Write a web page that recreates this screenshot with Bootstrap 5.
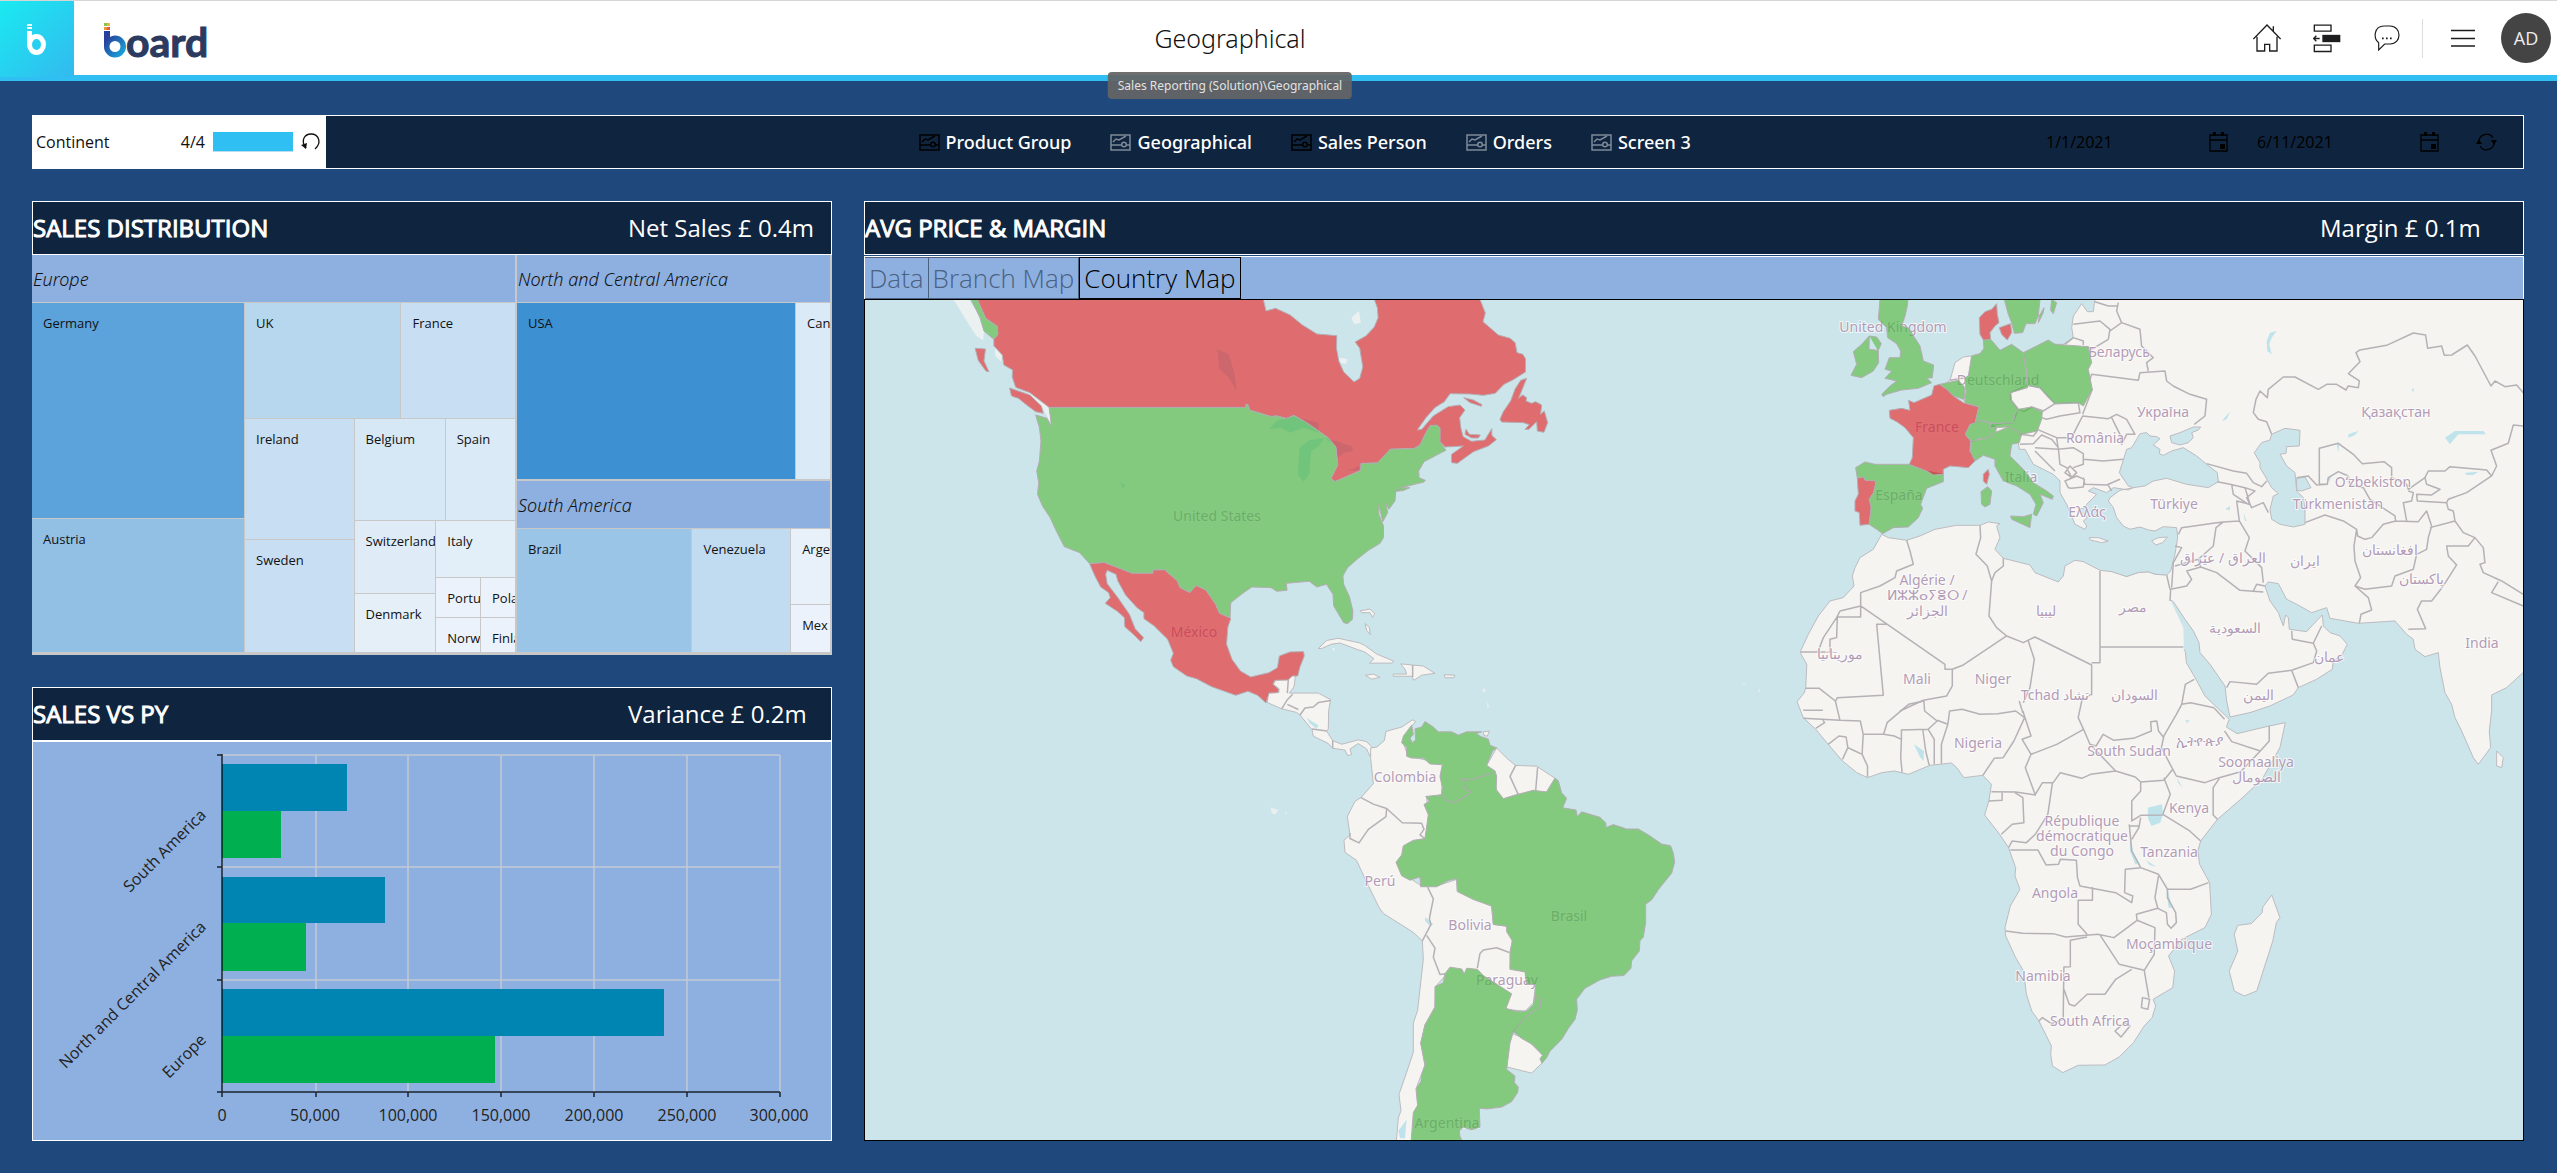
<!DOCTYPE html>
<html lang="en">
<head>
<meta charset="utf-8">
<meta name="viewport" content="width=device-width, initial-scale=1">
<title>Geographical</title>
<link rel="stylesheet" href="https://cdn.jsdelivr.net/npm/bootstrap@5.3.0/dist/css/bootstrap.min.css">
<style>
:root{--navy:#0f243e;--page:#1f497d;--pale:#8db0e1;--sky:#30bff3;--rule:#c8c8c8}
body{background:var(--page);font-family:"Open Sans","Noto Sans",sans-serif;color:#111;font-size:16px}
.topbar{height:81px;border-top:1px solid #d6d6d6;border-bottom:6px solid var(--sky);background:#fff}
.brandbox{width:74px;height:76px;background:linear-gradient(135deg,#1aeaf0,#33b9ef);z-index:1}
.brand{width:230px}
.wordmark{width:110px;height:50px;margin-left:30px;margin-top:17px;overflow:visible}
.wordmark text{font-family:Lato,sans-serif;font-weight:700;font-size:41px;fill:#2b3a5e;stroke:#2b3a5e;stroke-width:1}
.page-title{font-family:"Noto Sans",sans-serif;font-size:25px;font-weight:300;line-height:34px;color:#111}
.path-tip{font-family:"Noto Sans",sans-serif;top:71px;left:50%;transform:translateX(-50%);background:rgba(100,100,100,.93);color:#e2e2e2;font-size:12px;line-height:27px;border-radius:4px;padding:0 10px;z-index:5}
.actions{width:327px;padding-right:6px;padding-left:23px}
.actions button,.plain-btn{background:none;border:0;padding:0;line-height:0}
.avatar{width:50px;height:50px;background:#444;color:#eee;font-size:18px}
.split{width:1px;height:39px;background:#ddd;margin:0 28px 0 22px}
main{min-height:calc(100vh - 81px);padding:34px 33px 32px 32px;gap:32px}
.filterbar{height:54px;border:1px solid #fff;background:var(--navy)}
.selector{width:293px;padding-left:3px;padding-right:5px}
.meter{width:80px;height:20px;background:var(--sky);border-bottom:1px solid #bde}
.screens{margin-left:23.8%;gap:39px}
.screens a{font-family:"Noto Sans",sans-serif;color:#fff;font-size:18px;text-decoration:none;gap:6px;font-weight:500}
.screens svg{color:#000}
.screens .dim svg{color:#7e8a99}
.dates{padding-right:26px}
.dates input{background:none;border:0;padding:0;width:163px;color:#000;font-size:16px}
.dates label{width:211px}
.board-grid{display:grid;grid-template-columns:800fr 1660fr;gap:32px}
.left-col{display:grid;grid-template-rows:1fr 1fr;gap:32px;min-width:0}
.head{height:54px;border:1px solid #fff;background:var(--navy);color:#fff;font-size:24px;line-height:52px}
.head h2{font-size:24px;line-height:52px;font-weight:400;-webkit-text-stroke:1px #fff;margin:0}
.head span{width:203px}
.tree{background:var(--rule);padding-bottom:3px;padding-right:2px}
.tree .d-flex{min-width:0;min-height:0}
.grp{height:47px;background:var(--pale);font-family:"Noto Sans",sans-serif;font-size:18px;font-style:italic;font-weight:300;line-height:49px;padding-left:1px;white-space:nowrap;overflow:hidden;flex:none}
.tile{overflow:hidden;white-space:nowrap;text-indent:11px;font-size:13px;line-height:41px;min-width:0;min-height:0}
.g1{gap:1px}.g2{gap:2px}
.chart-box{background:var(--pale);border:1px solid #fff}
.chart-box svg,.map-box svg{position:absolute;inset:0;width:100%;height:100%}
.chart-box text{font-size:16px;fill:#222}
.tabs{background:var(--pale);border:1px solid #fff;border-bottom:0;height:43px;margin-top:1px}
.tabs button{background:none;border:1px solid #4b6180;border-left-width:0;color:#4b6180;font-size:26px;font-weight:300;line-height:32px;padding:4px 4px}
.tabs button.on{color:#000;border:1px solid #000}
.map-box{background:#cce5eb;border:1px solid #000;overflow:hidden}
.land{fill:#f5f4f1;stroke:#bcbcc0;stroke-width:1}
.fillin{fill:#f5f4f1;stroke:none}
.sea{fill:#cce5eb;stroke:#bcbcc0}
.lake{fill:#bfe3ea;stroke:none}
.bord{fill:none;stroke:#b5b1b6;stroke-width:1.5}
.map-box path{vector-effect:non-scaling-stroke;stroke-linejoin:round}
.names{font-family:"Noto Sans",sans-serif;font-size:14px;text-anchor:middle;fill:#b39cb6;stroke:#fff;stroke-opacity:.7;stroke-width:2;paint-order:stroke}
</style>
<script src="https://cdn.jsdelivr.net/npm/bootstrap@5.3.0/dist/js/bootstrap.bundle.min.js"></script>
</head>
<body>
<svg width="0" height="0" class="position-absolute" aria-hidden="true">
  <symbol id="screen" viewBox="0 0 21 17"><g fill="none" stroke="currentColor" stroke-width="1.5"><rect x="1" y="1" width="19" height="15"/><path d="M1 11H12M16 11H20M3 8L6 5L9 6L16 2"/><circle cx="14" cy="10.500" r="2.300"/></g></symbol>
  <symbol id="cal" viewBox="0 0 19 20"><g fill="none" stroke="#000" stroke-width="1.300"><path d="M1 3H18V19H1ZM1 8H18"/></g><path d="M4 0H7V4H4ZM12 0H15V4H12ZM11 12H16V17H11Z"/></symbol>
</svg>

<header class="topbar d-flex position-relative">
  <div class="brand d-flex flex-shrink-0">
    <a class="brandbox position-relative flex-shrink-0 d-block" href="#" aria-label="Home">
      <svg width="74" height="76" viewBox="0 0 74 76"><g fill="#fff"><rect x="27" y="23" width="5" height="2" opacity=".9"/><rect x="27" y="26" width="5" height="2"/><rect x="27" y="30" width="5" height="15"/></g><ellipse cx="36.500" cy="43.500" rx="7" ry="8" fill="none" stroke="#fff" stroke-width="5"/></svg>
    </a>
    <svg class="wordmark flex-shrink-0" viewBox="0 0 110 50" role="img" aria-label="board">
      <defs><linearGradient id="bl" x1="0" y1="0" x2="1" y2="1"><stop offset=".2" stop-color="#27419a"/><stop offset="1" stop-color="#16b6e8"/></linearGradient></defs>
      <rect x="0" y="5" width="3" height="3" fill="#8cc152"/><rect x="3" y="5" width="3" height="3" fill="#f2b33d"/><rect x="0" y="9" width="3" height="3" fill="#f39237"/><rect x="3" y="9" width="3" height="3" fill="#e2574c"/>
      <path fill="url(#bl)" fill-rule="evenodd" d="M0 13H6V19Q8 17.500 11 17.500A11 11 0 1 1 0 28.500ZM11 23A5.500 5.500 0 1 0 11 34A5.500 5.500 0 1 0 11 23Z"/>
      <text x="22" y="39">oard</text>
    </svg>
  </div>
  <div class="flex-grow-1 position-relative d-flex justify-content-center">
    <h1 class="page-title m-0 pt-1 mt-3 text-center">Geographical</h1>
    <div class="path-tip position-absolute text-nowrap">Sales Reporting (Solution)\Geographical</div>
  </div>
  <div class="actions d-flex align-items-center flex-shrink-0">
    <button type="button" aria-label="Home"><svg width="28" height="28" viewBox="0 0 84 84" fill="none" stroke="#1d1d1f" stroke-width="4"><path d="M1 45L42 3L83 45M12 38V81H35V61H50V81H72V38M61 7V22"/></svg></button>
    <button type="button" aria-label="Procedures" style="margin-left:32px"><svg width="28" height="29" viewBox="0 0 84 86" fill="none" stroke="#1d1d1f" stroke-width="4"><path d="M4 3H54V21H4ZM4 63H54V82H4ZM2 43H20M10 35L2 43L10 51"/><path d="M28 32H82V54H28Z" fill="#1d1d1f" stroke="none"/></svg></button>
    <button type="button" aria-label="Chat" style="margin-left:33px"><svg width="26" height="26" viewBox="0 0 78 78" fill="none" stroke="#1d1d1f" stroke-width="3.500"><path d="M14 53C-3 40 0 3 30 3H48C84 3 84 57 48 57H32L14 75Z"/><path d="M24 40H29M36 40H41M48 40H53" stroke-width="5"/></svg></button>
    <span class="split"></span>
    <button type="button" aria-label="Menu"><svg width="24" height="18" viewBox="0 0 24 18" stroke="#1d1d1f" stroke-width="1.500"><path d="M0 1.500H24M0 9.500H24M0 17H24"/></svg></button>
    <span class="avatar rounded-circle d-flex align-items-center justify-content-center ms-auto">AD</span>
  </div>
</header>

<main class="d-flex flex-column">
  <div class="filterbar d-flex">
    <div class="selector bg-white d-flex align-items-center flex-shrink-0">
      <span>Continent</span><span class="ms-auto me-2">4/4</span><span class="meter me-2"></span>
      <button type="button" class="plain-btn" aria-label="Reset"><svg width="20" height="18" viewBox="0 0 20 18" fill="none" stroke="#111" stroke-width="1.300"><path d="M5 15C-1 7 4 1 10 1C18 1 21 10 14 16"/><path d="M0 12L5 16L6 10Z" fill="#111" stroke="none"/></svg></button>
    </div>
    <nav class="screens d-flex align-items-center flex-shrink-0">
      <a class="d-flex align-items-center" href="#"><svg width="21" height="17"><use href="#screen"/></svg>Product Group</a>
      <a class="d-flex align-items-center dim" href="#"><svg width="21" height="17"><use href="#screen"/></svg>Geographical</a>
      <a class="d-flex align-items-center" href="#"><svg width="21" height="17"><use href="#screen"/></svg>Sales Person</a>
      <a class="d-flex align-items-center dim" href="#"><svg width="21" height="17"><use href="#screen"/></svg>Orders</a>
      <a class="d-flex align-items-center dim" href="#"><svg width="21" height="17"><use href="#screen"/></svg>Screen 3</a>
    </nav>
    <div class="dates d-flex align-items-center ms-auto">
      <label class="d-flex align-items-center"><input type="text" value="1/1/2021" aria-label="From"><svg width="19" height="20"><use href="#cal"/></svg></label>
      <label class="d-flex align-items-center"><input type="text" value="6/11/2021" aria-label="To"><svg width="19" height="20"><use href="#cal"/></svg></label>
      <button type="button" class="plain-btn ms-2" aria-label="Refresh"><svg width="21" height="18" viewBox="0 0 21 18" fill="none" stroke="#000" stroke-width="1.300"><path d="M3 9A7.500 7.500 0 0 1 17 5M18 9A7.500 7.500 0 0 1 4 13"/><path d="M0 11L3 6L6 11ZM15 7H21L18 12Z" fill="#000" stroke="none"/></svg></button>
    </div>
  </div>

  <div class="board-grid flex-grow-1">
    <div class="left-col">
      <section class="d-flex flex-column">
        <div class="head d-flex justify-content-between"><h2>SALES DISTRIBUTION</h2><span>Net Sales £ 0.4m</span></div>
        <div class="tree d-flex flex-fill g2" id="tree"></div>
      </section>
      <section class="d-flex flex-column">
        <div class="head d-flex justify-content-between"><h2>SALES VS PY</h2><span>Variance £ 0.2m</span></div>
        <div class="chart-box flex-fill position-relative">
          <svg viewBox="33 742 798 398">
            <g stroke="#c3c9d2" stroke-width="1.500"><path d="M316 755V1092M408 755V1092M501 755V1092M594 755V1092M687 755V1092M780 755V1092M222 755H780M222 867H780M222 980H780" fill="none"/></g>
            <g fill="#0085b2"><path d="M222 764H347V811H222ZM222 877H385V923H222ZM222 989H664V1036H222Z"/></g>
            <g fill="#00b050"><path d="M222 811H281V858H222ZM222 923H306V971H222ZM222 1036H495V1083H222Z"/></g>
            <path d="M222 754V1097M217 755H222M217 867H222M217 980H222M217 1092H780M316 1092V1097M408 1092V1097M501 1092V1097M594 1092V1097M687 1092V1097M780 1092V1097" fill="none" stroke="#000" stroke-opacity=".8" stroke-width="1.500"/>
            <g text-anchor="middle"><text x="222" y="1121">0</text><text x="315" y="1121">50,000</text><text x="408" y="1121">100,000</text><text x="501" y="1121">150,000</text><text x="594" y="1121">200,000</text><text x="687" y="1121">250,000</text><text x="779" y="1121">300,000</text></g>
            <g text-anchor="end"><text transform="translate(207 816) rotate(-45)">South America</text><text transform="translate(207 928) rotate(-45)">North and Central America</text><text transform="translate(207 1041) rotate(-45)">Europe</text></g>
          </svg>
        </div>
      </section>
    </div>

    <section class="d-flex flex-column">
      <div class="head d-flex justify-content-between"><h2>AVG PRICE &amp; MARGIN</h2><span>Margin £ 0.1m</span></div>
      <div class="tabs d-flex"><button type="button">Data</button><button type="button">Branch Map</button><button type="button" class="on">Country Map</button></div>
      <div class="map-box flex-fill position-relative">
        <svg viewBox="865 299 1658 840" preserveAspectRatio="xMidYMid slice">
          <defs>
            <g id="gain">
              <g transform="translate(850 290) scale(.3827 .3333)">
                <path d="M316 25H333L355 82 385 105 387 130 376 145 350 120 340 80Z"/>
                <path d="M520 349L1034 349 1034 340 1040 340 1045 357 1100 376 1115 374 1140 382 1160 373 1190 392 1225 420 1250 440 1270 468 1275 522 1257 563 1268 571 1300 555 1334 538 1335 517 1378 515 1412 474 1474 472 1489 462 1502 430 1515 404 1533 402 1542 410 1542 452 1557 478 1500 512 1486 540 1487 560 1503 568 1500 573 1440 590 1426 603 1424 630 1408 655 1400 635 1405 665 1392 692 1382 642 1382 670 1394 705 1394 740 1385 757 1355 778 1330 800 1300 830 1288 855 1290 880 1305 917 1314 960 1313 985 1300 998 1290 995 1264 945 1262 910 1245 880 1220 888 1200 871 1140 877 1142 898 1115 901 1100 890 1050 888 1025 908 995 935 993 980 965 967 955 940 930 898 905 884 888 905 862 890 855 870 822 837 792 837 792 847 737 847 665 815 626 818 600 785 560 767 540 722 523 680 503 645 490 610 493 575 488 540 495 510 499 450 495 410 485 372 515 382 526 405 524 380Z"/>
                <path d="M1425 601L1440 590 1463 590 1445 599Z"/>
              </g>
              <g transform="translate(1250 600) scale(.3333 .3654)">
                <path d="M485 340L460 370 455 388 470 400 470 425 485 430 520 430 540 446 577 448 570 480 577 510 575 527 587 545 612 552 655 530 664 522 645 515 637 487 660 490 722 473 735 465 710 450 728 410 740 402 720 395 715 378 690 370 680 362 695 358 650 358 625 367 605 358 565 358 550 345 525 330 515 345 495 350 497 380 487 388 480 375 490 365Z"/>
                <path d="M527 535L577 530 587 545 612 552 655 530 664 522 645 515 637 487 660 490 722 473 735 465 740 480 738 515 760 541 800 530 850 518 890 523 915 485 925 492 935 525 950 540 938 566 978 572 982 590 995 577 1050 592 1068 608 1068 620 1090 612 1130 624 1165 624 1195 640 1235 665 1262 670 1270 690 1274 715 1265 745 1225 790 1205 818 1187 830 1187 880 1180 920 1170 930 1168 958 1145 985 1143 1005 1122 1025 1085 1027 1050 1037 1005 1060 980 1090 982 1120 975 1145 955 1170 935 1200 900 1232 890 1250 876 1265 870 1253 878 1243 850 1215 815 1197 790 1178 825 1140 872 1108 873 1090 855 1080 857 1050 830 1048 825 1015 780 1008 780 960 787 930 770 905 770 890 730 885 725 835 670 817 622 795 620 760 595 765 560 782 512 782 510 755 480 764 455 752 438 715 455 695 460 670 490 655 525 650 535 585 522 557 538 548Z"/>
                <path d="M600 1002L635 1007 643 1020 650 1005 682 1008 700 1025 785 1075 768 1115 800 1123 830 1122 850 1105 855 1080 873 1090 872 1108 825 1140 790 1180 780 1210 770 1282 795 1300 793 1318 805 1330 803 1345 785 1370 755 1385 710 1390 688 1388 690 1440 665 1447 640 1440 628 1450 630 1465 640 1485 483 1485 490 1400 503 1380 498 1335 513 1315 515 1295 525 1270 512 1210 525 1160 555 1112 555 1055 580 1045 585 1020Z"/>
              </g>
              <g transform="translate(1750 290) scale(.3333)">
                <path d="M390 25L474 25 472 45 465 75 455 105 475 110 510 165 520 210 551 222 547 260 530 262 545 275 505 292 455 297 410 310 400 317 395 310 420 285 440 270 405 262 425 240 405 235 418 200 450 200 452 180 440 158 413 140 410 110 385 85Z"/>
                <path d="M358 135L380 138 394 158 385 178 386 215 370 240 335 260 303 253 320 220 310 182 335 160ZM358 135L357 175 383 178"/>
                <path d="M763 25H870L865 75 855 98 828 98 818 125 793 127 785 95 775 70ZM905 25L920 35 910 68 902 58ZM882 50L880 65 865 95 868 75Z"/>
                <path d="M700 147L722 145 735 160 750 178 785 160 820 185 825 220 833 290 782 305 785 330 805 355 790 395 740 400 690 388 675 395 686 348 645 335 648 300 645 260 655 255 665 195 690 188 702 172Z"/>
                <path d="M820 185L895 147 915 160 1015 167 1025 215 1015 235 1027 295 1000 345 985 335 915 338 895 318 870 290 833 283 830 240Z"/>
                <path d="M570 280L625 268 645 290 643 325 610 315 590 295Z"/>
                <path d="M713 587L725 600 720 640 705 648 695 640 693 602ZM782 675L820 677 845 670 840 710 785 685Z"/>
                <path d="M478 520L530 540 580 550 580 572 530 592 512 640 518 652 505 680 475 708 430 710 398 728 380 715 357 700 363 650 357 625 370 605 376 580 376 570 345 568 340 558 322 562 317 530 345 513 375 520Z"/>
                <path d="M660 400L690 388 725 398 740 410 735 425 715 440 690 443 665 452 645 430Z"/>
                <path d="M805 355L845 348 877 362 875 385 862 420 815 430 775 408 720 410 725 398 790 395 795 370Z"/>
                <path d="M665 450L715 440 735 425 775 408 815 430 808 455 785 460 780 495 825 540 850 575 890 600 910 615 907 625 870 610 880 635 860 675 850 670 858 640 840 610 800 585 760 570 735 525 735 505 700 493 675 510 662 485Z"/>
              </g>
            </g>
            <g id="loss">
              <g transform="translate(850 290) scale(.3827 .3333)">
                <path d="M333 25L1080 25 1087 60 1112 52 1150 72 1182 102 1220 129 1272 134 1271 170 1277 210 1290 243 1317 273 1332 262 1340 228 1332 172 1320 153 1348 135 1370 108 1380 80 1378 50 1370 25 1646 25 1660 66 1654 92 1694 132 1725 142 1738 155 1743 185 1758 190 1765 203 1765 243 1733 266 1709 280 1686 307 1655 313 1620 309 1568 308 1553 332 1528 350 1505 380 1482 417 1494 415 1524 375 1563 347 1594 342 1607 357 1593 380 1596 410 1602 437 1624 451 1659 447 1677 413 1677 433 1689 446 1668 465 1629 482 1587 517 1572 515 1572 490 1603 465 1555 468 1542 452 1542 410 1533 402 1515 404 1502 430 1489 462 1474 472 1412 474 1378 515 1335 517 1334 538 1300 555 1268 571 1257 563 1275 522 1270 468 1250 440 1225 420 1190 392 1160 373 1140 382 1115 374 1100 376 1045 357 1040 340 1034 340 1034 349 520 349 470 305 433 289 424 258 425 237 402 222 398 192 376 165 376 145 387 130 385 105 355 82Z"/>
                <path d="M327 172L354 174 350 210 363 242 355 240 335 208ZM417 291L470 312 500 345 505 367 485 362 465 345 440 322 422 315Z"/>
                <path d="M626 818L665 815 737 847 792 847 792 837 822 837 855 870 862 890 888 905 905 884 930 898 955 940 965 967 995 982 987 1010 984 1060 998 1105 1020 1140 1047 1158 1095 1145 1117 1130 1122 1095 1150 1083 1185 1082 1187 1095 1175 1130 1170 1155 1155 1155 1145 1167 1110 1168 1105 1180 1120 1195 1118 1205 1095 1206 1087 1236 1065 1213 1040 1201 1008 1213 945 1187 905 1163 880 1155 845 1127 838 1108 845 1087 830 1045 795 1005 768 983 768 965 750 950 720 912 700 870 695 850 672 838 668 850 672 878 700 920 730 970 745 1013 767 1040 760 1052 745 1035 718 1007 717 980 700 962 667 937 680 920 676 905 655 888 640 855Z"/>
              </g>
              <g transform="translate(1390 290) scale(.3333)">
                <path d="M410 262L392 268 375 295 362 330 340 362 330 385 335 393 400 395 418 401 405 415 417 415 440 392 442 420 462 424 473 395 463 360 452 370 455 342 437 332 425 337 408 330 410 320 398 312 386 322Z"/>
                <path d="M221 320L250 327 276 341 274 346 240 335ZM228 415L238 430 271 432 265 441 245 441 225 430Z"/>
              </g>
              <g transform="translate(1750 290) scale(.3333)">
                <path d="M740 38L742 70 747 95 735 105 720 125 722 145 700 147 690 130 688 80 705 62 725 55ZM748 110L782 98 785 125 772 147 755 130Z"/>
                <path d="M568 280L590 295 610 315 640 335 686 348 675 395 660 400 645 430 662 450 660 480 675 510 655 530 600 525 580 535 580 550 550 552 530 540 478 520 487 500 490 440 465 410 440 392 420 382 418 358 455 352 480 358 476 328 492 335 545 312 552 285Z"/>
                <path d="M715 535L718 550 710 580 700 570 700 550Z"/>
                <path d="M322 562L340 558 345 568 376 570 376 580 370 605 357 625 363 650 357 700 330 703 328 665 315 660 315 630 325 610Z"/>
              </g>
            </g>
          </defs>

          <!-- Europe and Asia -->
          <g transform="translate(2130 290) scale(.3333)">
            <path class="land" d="M-105 20H1190V1135L1130 1190 1085 1212 1085 1260 1078 1320 1082 1370 1060 1400 1045 1420 1030 1400 995 1320 975 1280 965 1240 945 1205 930 1130 925 1085 885 1097 855 1075 850 1045 830 1030 795 990 685 997 600 982 590 950 545 965 500 940 470 925 445 878 415 873 405 885 420 930 445 965 460 1005 467 972 475 980 478 1015 530 1022 550 1000 577 972 580 1005 600 1025 630 1035 652 1060 637 1090 610 1110 607 1135 560 1165 505 1190 490 1212 420 1245 360 1265 300 1278 290 1230 285 1185 240 1120 210 1085 207 1055 190 1020 165 985 130 932 118 925 105 935 65 885 105 960 130 1010 135 1045 165 1080 -60 1080 -60 842 -10 857 25 845 55 843 75 850 110 852 122 840 135 790 143 740 140 710 100 707 75 720 55 717 30 708 0 715 -20 705 -40 680 -50 650 -65 630 -60 620 -30 598 10 590 -5 597 -50 590 -70 605 -110 590 -125 600 -100 610 -130 640 -135 650 -155 655 -128 680 -140 690 -130 705 -135 715 -165 700 -190 640 -210 605 -210 570 -230 550 -290 520 -315 475 -332 475 -335 455 -400 420 -490 430 -495 330 -560 283 -540 268 -525 215 -500 198 -475 195 -420 180 -320 190 -235 160 -200 160 -170 140 -175 110 -170 75 -145 38 -128 62 -110 62Z"/>
            <path class="land" d="M-122 740L-95 740 -65 750 -85 755 -120 747ZM65 750L85 740 112 738 98 755 78 762ZM1100 1380L1120 1400 1115 1430 1100 1425Z"/>
            <path class="sea" d="M-5 585L-32 545 -10 475 5 470 20 445 30 428 50 425 60 435 80 437 90 443 70 462 90 475 88 488 100 493 125 480 160 470 200 495 230 520 262 545 265 572 235 590 170 580 110 562 70 570 45 585 10 590Z"/>
            <path class="sea" d="M120 435L150 425 190 408 212 408 205 417 185 425 190 440 175 455 150 462 125 455Z"/>
            <path class="sea" d="M425 430L465 412 510 418 508 465 470 467 468 487 450 490 470 525 495 545 500 600 520 620 525 655 525 700 490 708 450 700 425 685 420 655 430 615 445 608 425 590 405 555 390 530 390 515 373 485 395 455 420 447ZM500 562L525 558 543 590 515 600 500 598Z"/>
            <path class="lake" d="M945 440L975 420 1060 420 1068 430 985 430 960 460ZM1005 545L1045 542 1030 552 1010 552ZM655 430L685 420 675 432 655 440ZM410 150L420 125 440 120 425 140 418 160 425 190 412 180ZM285 655L300 645 300 658ZM340 665L350 690 345 690ZM275 390L300 362 290 385ZM845 295L852 292 850 305ZM590 565L605 550 600 570ZM620 460L628 458 625 485Z"/>
          </g>
          <!-- Africa -->
          <g transform="translate(1750 290) scale(.3333)">
            <path class="land" d="M1245 852L1215 850 1195 843 1165 845 1130 857 1085 842 1050 838 1000 812 975 808 945 825 940 855 925 873 855 845 840 822 760 802 735 775 750 740 740 705 750 698 715 693 690 703 620 703 555 715 510 735 470 748 415 740 395 730 370 775 330 800 315 830 307 855 312 885 280 920 240 930 205 975 175 1030 152 1080"/>
            <path class="fillin" d="M153 1082L316 890 1235 870 1300 1010 1302 1082Z"/>
          </g>
          <g transform="translate(1780 650) scale(.3571 .3333)">
            <path class="land" d="M58 0L58 8 75 40 72 110 68 125 48 152 65 200 100 235 135 280 175 330 215 365 245 380 285 365 320 360 360 370 420 343 480 336 495 350 515 380 568 373 592 400 585 450 573 492 615 550 640 590 660 650 658 675 672 715 645 765 630 830 632 855 660 920 682 960 690 1030 705 1080 725 1110 760 1185 758 1210 763 1245 792 1265 835 1243 910 1242 950 1218 990 1175 1020 1125 1042 1100 1052 1065 1045 1045 1100 1010 1105 960 1088 915 1125 865 1190 830 1208 790 1203 695 1175 640 1170 600 1178 570 1225 505 1290 445 1350 385 1400 290 1415 215 1370 225 1280 248 1250 228 1258 205 1190 135 1165 85 1138 35 1135 0"/>
            <path class="land" d="M1377 732L1400 800 1390 815 1380 870 1335 1020 1300 1035 1272 1020 1258 960 1282 900 1272 850 1282 823 1320 818 1350 785 1352 768Z"/>
            <path class="lake" d="M1030 470L1070 460 1072 490 1065 515 1040 525 1030 500ZM1025 628L1055 648 1035 642ZM1080 690L1088 770 1098 770 1082 700ZM1112 380L1128 412 1115 395ZM980 540L988 600 1008 640 995 640 980 600ZM1135 208L1148 208 1140 217ZM375 280L403 300 402 330 392 318Z"/>
            <path class="fillin" d="M66 -12H1125V20H72Z"/>
          </g>
          <!-- Central and South America -->
          <g transform="translate(1250 600) scale(.3333 .3654)">
            <path class="land" d="M52 278L55 252 87 250 87 240 70 228 78 215 115 215 130 203 136 206 132 235 118 252 155 252 205 252 242 270 236 300 235 350 230 356 248 382 275 392 325 380 350 385 368 402 360 425 350 405 325 390 300 405 305 420 293 423 285 408 248 403 235 390 190 370 186 352 150 312 140 305 95 295Z"/>
            <path class="land" d="M205 130L230 108 265 102 330 115 345 122 380 145 432 165 425 170 358 170 372 158 345 140 320 132 270 115 245 118 215 130ZM452 172L520 178 555 198 515 203 492 217 485 206 430 206 430 200 470 200 465 187ZM346 203L370 200 390 209 365 214ZM582 202L615 203 612 210 585 210ZM330 27L360 22 374 35 368 45 360 32 335 32ZM345 62L358 72 361 92 350 80ZM700 358L718 356 712 370 702 368Z"/>
            <path class="land" d="M362 402L380 400 403 382 408 357 455 345 488 325 497 330 475 352 460 390 475 425 580 445 575 530 530 540 537 600 530 650 470 670 450 715 465 750 515 780 560 780 620 762 622 795 725 835 730 885 770 890 787 930 780 1005 830 1015 857 1050 850 1100 825 1123 775 1118 790 1185 830 1200 878 1243 876 1265 845 1292 770 1275 770 1120 600 1010 557 1055 555 1110 525 1160 513 1210 525 1270 500 1330 503 1380 485 1490 438 1490 445 1415 453 1395 447 1350 470 1290 490 1235 490 1155 503 1120 520 980 517 930 490 907 400 855 388 840 345 760 320 710 285 688 282 655 300 640 292 590 315 548 333 538 370 500 362 430Z"/>
            <path class="land" d="M740 402L770 430 797 450 860 452 915 485 890 522 800 530 760 542 740 520 735 470 710 450Z"/>
            <path class="fillin" opacity=".7" d="M62 565L85 572 75 585 65 580ZM105 578L112 580 108 585ZM698 240L706 240 704 250 698 248ZM712 275L718 290 712 292ZM1478 225L1484 225 1484 232ZM1525 240L1532 245 1526 250ZM245 128L256 130 250 138Z"/>
            <path class="lake" d="M170 320L205 340 200 350 180 335ZM525 865L550 885 540 890 525 875ZM445 1450L470 1420 465 1470 450 1470Z"/>
          </g>
          <g transform="translate(850 290) scale(.3827 .3333)"><path class="fillin" opacity=".75" d="M270 25L310 25 330 60 350 120 348 148 330 135 300 80ZM378 168L398 190 395 212 380 195ZM440 290L470 300 520 349 526 405 515 375 500 345 470 310ZM1278 200L1300 205 1295 220 1282 215ZM1310 80L1330 60 1335 95 1318 100Z"/></g>

          <use href="#gain" class="fillin"/><use href="#loss" class="fillin"/>
          <g transform="translate(850 290) scale(.3827 .3333)"><path class="lake" d="M1095 415L1115 390 1155 375 1225 395 1225 425 1185 410 1150 425 1125 410ZM1175 470L1200 448 1240 440 1225 465 1205 480 1200 550 1185 572 1170 550 1173 500ZM1240 440L1310 465 1315 480 1290 485 1275 500 1268 465ZM960 175L990 190 1005 250 1010 300 990 260 965 235ZM705 575L718 580 715 595ZM1300 540L1330 525 1330 538Z"/></g>

          <!-- Borders -->
          <g class="bord">
            <path class="bord" transform="translate(1250 600) scale(.3333 .3654)" d="M115 215L112 252M128 255L112 270 95 295M112 283L145 297M150 312L165 293 190 290 205 278 242 272M186 350L230 356M248 382L248 403M488 175L488 208M797 450L780 480 805 530M863 455L857 520M333 538L370 556 410 568 457 607 515 608 522 625 510 640 525 650M410 568L408 590 355 625 327 662 300 650 300 635M533 783L550 815 538 870 543 885 517 930M530 915L555 950 550 975 570 1022 585 1020M682 1005L690 965 700 955 740 949 778 962"/>
            <path class="bord" transform="translate(1750 290) scale(.3333)" d="M782 305L830 283 870 290 895 318 915 338 880 360 845 348 822 362 805 355 782 325ZM877 362L915 338 985 335 990 365 930 375 890 385 875 380M862 415L920 440 965 440 985 400 998 375 1075 383 1100 370 1130 385 1155 430 1130 430 1115 460 1110 430 1085 380M920 440L925 475 970 470 1000 488 1000 505 1060 510 1120 505M810 430L850 435 862 420M810 460L850 458 875 432 905 445 925 470 930 520 950 530 965 560M855 470L925 475M855 480L915 540M955 590L945 570 980 555 1003 565 1000 588 965 592ZM945 545L960 525 980 545 965 560ZM1000 500L1000 520 970 530M1000 560L1005 580 1070 582 1110 565M1075 583L1085 600M1035 32L1075 45 1105 45M1105 35L1100 60 1115 95 1080 120M970 100L1050 90 1080 115 1075 145 1025 175 1015 167M1115 95L1170 115 1175 165 1210 200 1190 215 1195 240M945 160L970 140 1000 150 1000 162M1020 265L1025 250 1165 268 1170 245 1245 240 1250 270 1270 285 1320 310 1370 325 1365 375 1333 400M998 370L1027 295M600 268L645 260M470 748L480 780 490 820 440 840 435 860 390 885 332 905 332 978 262 978 260 1040 240 1045 240 1083M152 1083H250M332 945L270 960 260 980 220 1040 205 1080M332 945L585 1120 585 1135 607 1135 640 1122 770 1035 740 1010 717 975 725 870 712 825 678 790 692 740 690 703M725 870L735 845 760 825 760 802M770 1035L820 1055 855 1038 1025 1122 1025 1213M1050 840V1115H1025M1050 1068H1300M410 1000H380L400 1213 262 1220 257 1230M607 1135V1185L590 1215 520 1228 450 1260M835 1050L853 1105 840 1190 820 1235"/>
            <path class="bord" transform="translate(1780 650) scale(.3571 .3333)" d="M72 112L110 112 155 150 168 208 65 202M120 208L125 215 100 232M65 178L120 178M168 208L225 210 233 250 230 310 245 345 245 378M135 280L165 255 185 258 190 290 175 325M190 290L210 300 230 310M233 250L290 250 320 255 340 265 338 320 342 365M290 250L300 215 360 160 403 150 405 180 440 210 415 235 340 237 340 265M400 237L408 300 418 343M415 235L432 265 432 340M440 208L470 220 452 280 452 338M470 220L475 180 510 175 560 190 610 188 660 180 685 200 655 270 625 320 600 322 568 373M680 180L703 255 678 265 703 310 775 280 850 235 835 200 845 150 870 130M670 150L680 185M703 310L687 350 715 432 660 423 592 422M850 235L868 280 885 285 905 250 935 268 990 262 1040 240 1038 212 1055 210 1060 240 1075 260M868 280L940 360 995 378 1010 393 1075 388 1100 355 1068 290 1075 255 1110 190 1125 160 1150 155 1215 170 1245 205M1125 160L1135 100 1160 85M715 430L735 395 765 395 785 365 845 382 870 370 940 360M1245 240L1265 272 1345 300 1370 270 1370 225M1345 300L1290 362 1230 380 1190 395 1110 375 1100 355M1230 383L1213 410 1213 492 1225 505M1075 380L1093 430 1072 490 1145 538 1178 570M1072 492L1010 493 985 510 985 450 1010 420 1010 393M1010 500L1005 530 985 565M980 525L1005 525M585 450L622 448 622 423M658 425L680 440 683 515 650 520 620 550M763 395L750 490 715 550 690 575 650 570 640 590M645 597L722 597 745 642 780 640 785 625 830 628 833 680 840 705 940 725 985 755 988 735 965 725 967 655 1010 650 985 600 978 520M1010 650L1060 670 1085 715 1150 715 1200 695M875 708V748H835V820L860 850M632 840L680 847 765 848 800 858 890 850 935 860 1000 808 998 790 1058 772 1050 740 1060 675M1058 772L1082 785 1085 820 1095 832 1110 815 1108 785 1085 740 1085 715M1000 808L1050 830 1048 910 1020 958 1033 1040M895 850L950 940 1020 958M985 955L940 985 910 1030 860 1030 825 1065 810 1060 795 1015M860 858L813 868 813 947 795 948 793 1105 760 1118 735 1100 725 1110M1015 1040L1035 1045 1030 1075 1012 1070ZM938 1140L965 1115 980 1125 955 1158Z"/>
            <path class="bord" transform="translate(2130 290) scale(.3333)" d="M425 430L410 392 385 385 370 365 378 325 390 300 412 320 415 295 460 258 495 258 565 295 590 280 620 280 648 297 655 285 685 290 688 270 655 248 690 212 678 185 690 177 770 163 850 126 887 132 893 172 935 165 943 193 965 192 1012 162 1035 195 1083 285 1095 270 1125 287 1160 282 1180 305M1180 405L1150 402 1135 457 1083 478 1100 525 1085 555 1070 537 960 527 945 540 895 540 885 560 835 595 830 580 785 560 785 530 762 512 697 518 670 490 625 457 568 472 568 580 592 580 595 560 625 542 655 555 660 582 700 590 720 625 795 675 797 690M500 560L535 555 560 582 592 580M835 600L850 605 845 630 820 635 830 690M885 560L890 580 930 595 905 612 860 610 862 630 950 635 955 625 1010 605 1085 555M950 635L955 655 970 660 975 690 900 710M525 695L585 672 640 690 680 715 683 735 705 745 725 740 760 700 797 690 865 692 890 660 905 705M975 690L1000 725 1035 740 1015 765 950 765 955 795 980 822 940 885 905 930 875 930 862 955 887 1013 835 1015M905 705L895 740 890 775 860 790 850 835 795 855 785 885 705 895 675 885 692 860 675 810 672 765 680 715M675 885L715 920 725 957 693 970 688 997M1035 740L1060 770 1065 815 1050 820 1060 845 1115 870 1180 910M1105 872L1085 905 1180 945M230 518L310 540 350 547 370 575 395 587 410 570M262 572L300 580 345 590 360 640 320 630 328 690 280 693 260 695 155 710 145 730M305 580L310 610 355 640M345 590L375 600 350 620 365 650 400 635 415 665M328 690L358 740 345 780 395 830 400 875M280 693L258 710 250 765 205 805 135 825M205 805L212 828 170 840 185 865 170 885 122 895 120 930M212 828L260 845 330 898 400 903M370 900L380 880 405 885M485 1020L487 1045 550 1057 575 1005M550 1057L560 1080 550 1115 485 1138 415 1147 380 1180 300 1172 290 1190M485 1138L505 1190M135 765L155 770 130 815 125 890M110 852L120 895"/>
          </g>

          <g class="names">
            <text x="1217" y="520">United States</text><text x="1194" y="636">México</text><text x="1405" y="781">Colombia</text><text x="1380" y="885">Perú</text><text x="1470" y="929">Bolivia</text><text x="1507" y="984">Paraguay</text><text x="1569" y="920">Brasil</text><text x="1447" y="1127">Argentina</text>
            <text x="1893" y="331">United Kingdom</text><text x="1998" y="384">Deutschland</text><text x="1937" y="431">France</text><text x="1899" y="499">España</text><text x="2021" y="481">Italia</text><text x="2119" y="356">Беларусь</text><text x="2163" y="416">Україна</text><text x="2095" y="442">România</text><text x="2087" y="516">Ελλάς</text><text x="2174" y="508">Türkiye</text>
            <text x="1927" y="584">Algérie /</text><text x="1927" y="599">ⵍⵣⵣⴰⵢⴻⵔ /</text><text x="1927" y="615">الجزائر</text><text x="2046" y="615">ليبيا</text><text x="2133" y="611">مصر</text><text x="1840" y="658">موريتانيا</text><text x="1917" y="683">Mali</text><text x="1993" y="683">Niger</text><text x="2055" y="699">Tchad تشاد</text><text x="2134" y="699">السودان</text>
            <text x="1978" y="747">Nigeria</text><text x="2129" y="755">South Sudan</text><text x="2199" y="745">ኢትዮጵያ</text><text x="2256" y="766">Soomaaliya</text><text x="2256" y="781">الصومال</text><text x="2189" y="812">Kenya</text><text x="2082" y="825">République</text><text x="2082" y="840">démocratique</text><text x="2082" y="855">du Congo</text><text x="2169" y="856">Tanzania</text><text x="2055" y="897">Angola</text><text x="2169" y="948">Moçambique</text><text x="2043" y="980">Namibia</text><text x="2090" y="1025">South Africa</text>
            <text x="2396" y="416">Қазақстан</text><text x="2373" y="486">Oʻzbekiston</text><text x="2338" y="508">Türkmenistan</text><text x="2390" y="554">افغانستان</text><text x="2421" y="583">پاکستان</text><text x="2482" y="647">India</text><text x="2305" y="565">ایران</text><text x="2223" y="562">العراق / عێراق</text><text x="2235" y="632">السعودية</text><text x="2329" y="661">عمان</text><text x="2258" y="699">اليمن</text>
          </g>
          <use href="#gain" fill="#4bb444" fill-opacity=".67" stroke="#b3adb3" stroke-width="1"/>
          <use href="#loss" fill="#d3262c" fill-opacity=".66" stroke="#b3adb3" stroke-width="1"/>
        </svg>
      </div>
    </section>
  </div>
</main>
<script>
// Treemap: every node is {w: share of its parent, n: name, c: colour} or {w, dir, kids}
const T=(w,n,c)=>({w,n,c}), R=(w,...kids)=>({w,dir:'row',kids}), C=(w,...kids)=>({w,dir:'column',kids});
const G=(w,g,...kids)=>({w,g,dir:'column',kids});
const data=[
  G(483,'Europe',R(1,
    C(212,T(216,'Germany','#5ca3dc'),T(133,'Austria','#92c0e5')),
    C(270,
      R(115,T(156,'UK','#b6d7ee'),T(114,'France','#c7def3')),
      R(234,
        C(109,T(121,'Ireland','#c7def3'),T(113,'Sweden','#c7def3')),
        C(161,
          R(102,T(91,'Belgium','#d6e8f5'),T(70,'Spain','#dbeaf7')),
          R(132,
            C(81,T(73,'Switzerland','#dfecf8'),T(59,'Denmark','#e4eff8')),
            C(79,T(57,'Italy','#e2eef8'),
              R(40,T(45,'Portu','#ecf2fb'),T(35,'Pola','#ecf2fb')),
              R(35,T(45,'Norw','#ecf2fb'),T(35,'Finla','#ecf2fb'))))))))),
  {w:313,dir:'column',gap:2,kids:[
    G(224,'North and Central America',R(1,T(278,'USA','#3d91d2'),T(34,'Can','#dbeaf7'))),
    G(171,'South America',R(1,T(175,'Brazil','#9ac5e7'),T(98,'Venezuela','#c1dbf0'),C(39,T(75,'Arge','#e8f1fa'),T(47,'Mex','#ecf2fb'))))]}
];
function build(node,parent){
  const el=document.createElement('div');
  el.style.flex=node.w+' 1 0';
  if(node.n){el.className='tile';el.textContent=node.n;el.style.background=node.c}
  else{
    el.className='d-flex '+(node.gap?'g2 ':'g1 ')+(node.dir==='column'?'flex-column':'');
    if(node.g){const h=document.createElement('div');h.className='grp';h.textContent=node.g;el.append(h)}
    node.kids.forEach(k=>build(k,el));
  }
  parent.append(el);
}
data.forEach(d=>build(d,document.getElementById('tree')));
</script>
</body>
</html>
